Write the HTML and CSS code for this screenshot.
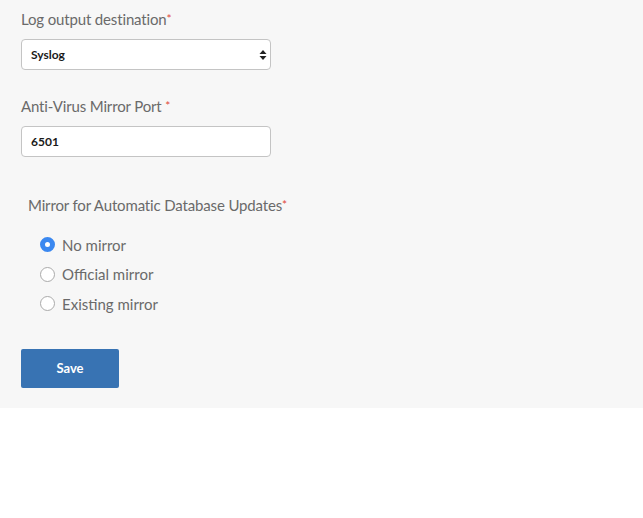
FILE: index.html
```html
<!DOCTYPE html>
<html>
<head>
<meta charset="utf-8">
<link rel="stylesheet" href="styles.css">
</head>
<body>
<div class="panel">
  <div class="field">
    <label class="label">Log output destination<span class="req">*</span></label>
    <div class="select">
      <span>Syslog</span>
      <svg class="arrows" width="8" height="12" viewBox="0 0 8 12"><path d="M4 1 L7.5 5 H0.5 Z M4 11 L7.5 7 H0.5 Z" fill="#222"/></svg>
    </div>
  </div>
  <div class="field">
    <label class="label">Anti-Virus Mirror Port <span class="req">*</span></label>
    <div class="input">6501</div>
  </div>
  <div class="group">
    <div class="label glabel">Mirror for Automatic Database Updates<span class="req">*</span></div>
    <div class="radios">
      <div class="radio"><span class="dot checked"></span>No mirror</div>
      <div class="radio"><span class="dot"></span>Official mirror</div>
      <div class="radio"><span class="dot"></span>Existing mirror</div>
    </div>
  </div>
  <button class="save">Save</button>
</div>
</body>
</html>
```
FILE: styles.css
```css
html, body { margin: 0; padding: 0; background: #fff; }
body { font-family: "Lato", "Open Sans", sans-serif; }
.panel {
  background: #f7f7f7;
  height: 408px;
  box-sizing: border-box;
  padding: 9px 21px 0 21px;
  display: flex;
  flex-direction: column;
}
.field { display: flex; flex-direction: column; }
.label {
  font-size: 15px;
  color: #6a6a6a;
  line-height: 20px;
  letter-spacing: -0.15px;
  font-weight: 400;
}
.req { color: #e0483a; font-size: 12px; vertical-align: top; }
.select, .input {
  margin-top: 10px;
  width: 250px;
  height: 31px;
  box-sizing: border-box;
  border: 1px solid #c4c4c4;
  border-radius: 4px;
  background: #fff;
  font-size: 12px;
  font-weight: 700;
  color: #1a1a1a;
  display: flex;
  align-items: center;
  padding: 0 9px;
}
.select { justify-content: space-between; padding-right: 3px; }
.field + .field { margin-top: 26px; }
.group { margin-top: 38px; padding-left: 7px; }
.radios { margin-top: 15px; padding-left: 12px; display: flex; flex-direction: column; }
.radio {
  display: flex; align-items: center;
  height: 29.5px;
  font-size: 15px; color: #6a6a6a; font-weight: 400;
}
.dot {
  width: 15px; height: 15px; border-radius: 50%;
  border: 1px solid #aaa; background: #fff;
  margin-right: 7px; box-sizing: border-box;
}
.dot.checked { background: #fff; border: 5px solid #3b88f0; }
.save {
  margin-top: 30px;
  width: 98px; height: 39px;
  background: #3873b3;
  color: #fff;
  border: none;
  border-radius: 2px;
  font-family: inherit;
  font-size: 13px;
  font-weight: 700;
}
```
